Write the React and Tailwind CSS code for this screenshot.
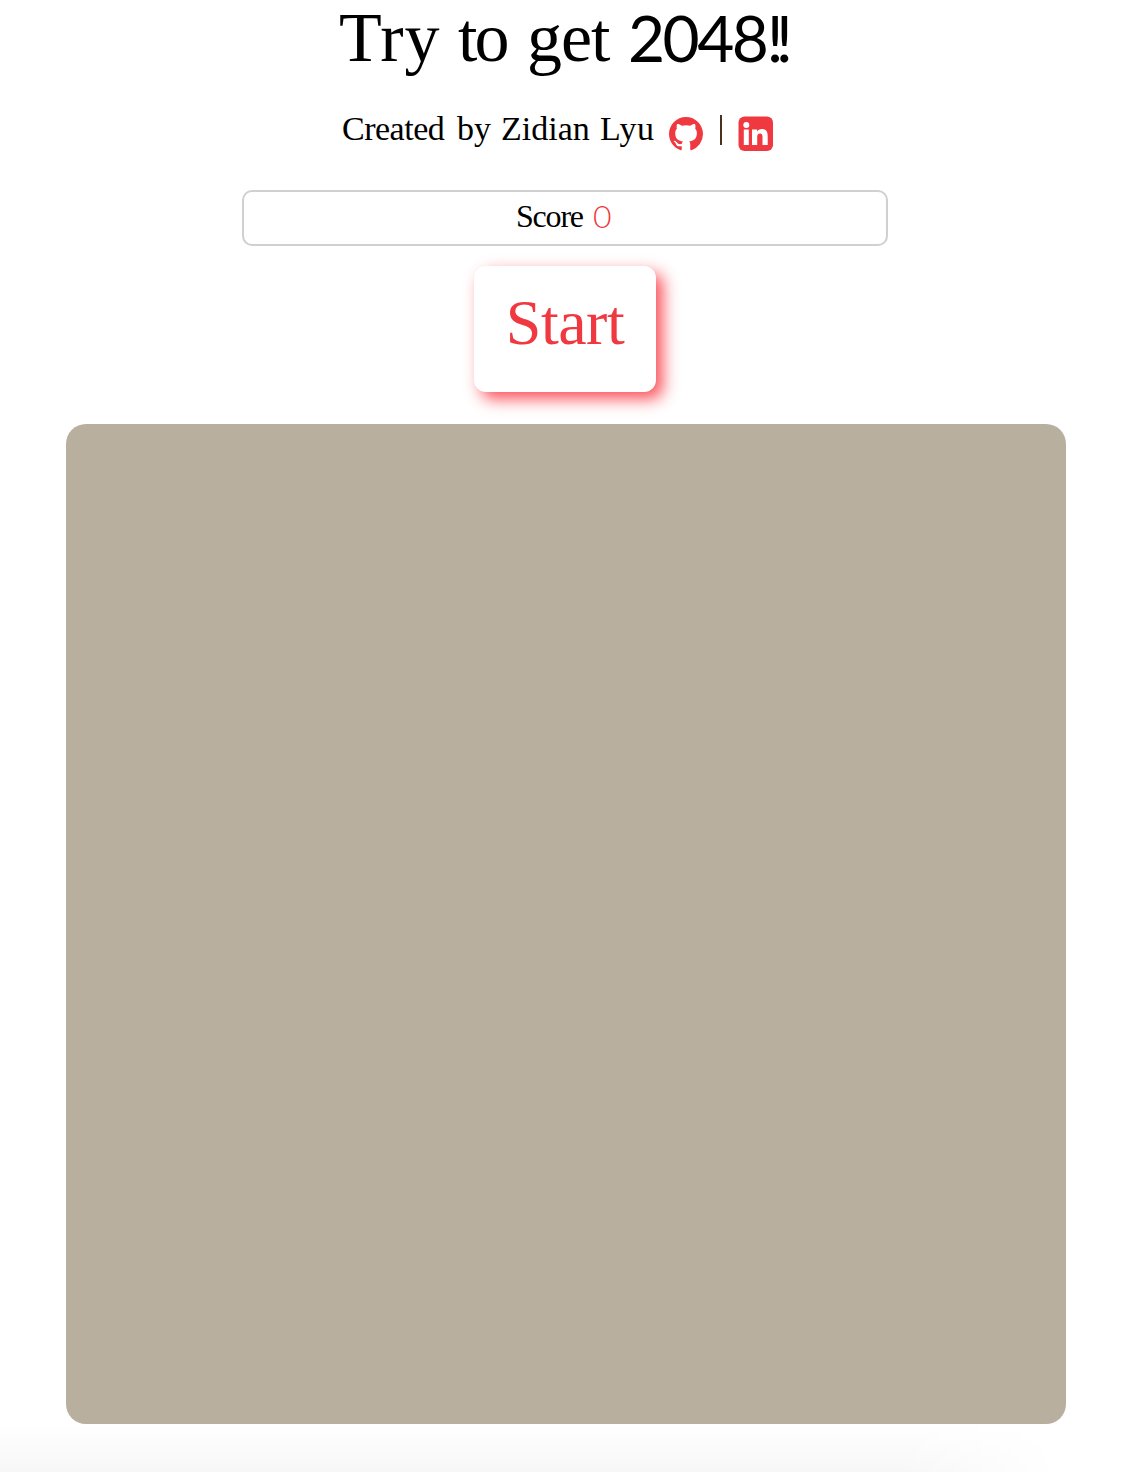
function GithubIcon() {
  return (
    <svg viewBox="0 0 16 16" className="ml-px mt-px h-[34px] w-[34px] fill-[#f03840]" aria-label="GitHub">
      <path d="M8 0C3.58 0 0 3.58 0 8c0 3.54 2.29 6.53 5.47 7.59.4.07.55-.17.55-.38 0-.19-.01-.82-.01-1.49-2.01.37-2.53-.49-2.69-.94-.09-.23-.48-.94-.82-1.13-.28-.15-.68-.52-.01-.53.63-.01 1.08.58 1.23.82.72 1.21 1.87.87 2.33.66.07-.52.28-.87.51-1.07-1.78-.2-3.64-.89-3.64-3.95 0-.87.31-1.59.82-2.15-.08-.2-.36-1.02.08-2.12 0 0 .67-.21 2.2.82.64-.18 1.32-.27 2-.27s1.36.09 2 .27c1.53-1.04 2.2-.82 2.2-.82.44 1.1.16 1.92.08 2.12.51.56.82 1.27.82 2.15 0 3.07-1.87 3.75-3.65 3.95.29.25.54.73.54 1.48 0 1.07-.01 1.93-.01 2.2 0 .21.15.46.55.38A8.01 8.01 0 0 0 16 8c0-4.42-3.58-8-8-8Z" />
    </svg>
  );
}

function LinkedinIcon() {
  return (
    <svg viewBox="0 0 35 35" className="h-[35px] w-[35px]" aria-label="LinkedIn">
      <rect x="0.5" y="0.5" width="34.5" height="34.5" rx="6" fill="#f03840" />
      <g fill="#fff">
        <circle cx="8.3" cy="9" r="3" />
        <path d="M5.8 13.5h5V29h-5zM14 13.5h5v2.1c.9-1.5 2.6-2.5 4.9-2.5 4.5 0 5.8 2.8 5.8 7.1V29h-5.2v-7.7c0-2.1-.4-3.7-2.4-3.7-2.2 0-2.9 1.6-2.9 3.8V29H14z" />
      </g>
    </svg>
  );
}

export default function App() {
  return (
    <main className="h-[1472px] w-[1140px] overflow-hidden bg-white font-['Liberation_Serif',serif] text-black">
      <h1 className="flex h-[80px] pl-[339px] pt-[6px] text-[70px] leading-[64px] whitespace-nowrap">
        <span className="w-[119px] tracking-[1px]">Try</span>
        <span className="w-[69px] tracking-[-3px]">to</span>
        <span className="w-[101px] tracking-[-1px]">get</span>
        <span className="font-['Lato',sans-serif] text-[64px] tracking-[-2.5px]">
          2048<span className="tracking-[-8px]">!!</span>
        </span>
      </h1>
      <div className="flex h-[110px] pl-[342px] text-[34px] leading-[40px] whitespace-nowrap">
        <p className="flex w-[326px] pt-[29px]">
          <span className="w-[115px] tracking-[-0.5px]">Created</span>
          <span className="w-[44px]">by</span>
          <span className="w-[99px]">Zidian</span>
          <span className="tracking-[0.5px]">Lyu</span>
        </p>
        <div className="flex pt-[36px]">
          <GithubIcon />
          <span className="ml-[17px] mr-[16px] -mt-px h-[30px] w-[2px] bg-[#4b301c]" />
          <LinkedinIcon />
        </div>
      </div>
      <div className="ml-[242px] flex h-[56px] w-[646px] rounded-[10px] border-2 border-[#d0d0d0] pl-[272px] pt-[4px] text-[32px] leading-[40px]">
        <span className="w-[77px] tracking-[-1.2px]">Score</span>
        <span className="font-['Lato',sans-serif] font-light text-[#f03840]">0</span>
      </div>
      <button className="ml-[474px] mt-[20px] block h-[126px] w-[182px] rounded-[12px] bg-white pb-[12px] text-[64px] leading-[60px] tracking-[-0.5px] text-[#f03840] shadow-[7px_7px_16px_#f8323cd8]">
        Start
      </button>
      <section className="ml-[66px] mt-[32px] h-[1000px] w-[1000px] rounded-[20px] bg-[#b8af9e]" />
      <div className="h-[48px] w-[1060px] bg-linear-to-b from-white to-[#f7f7f7] mask-r-from-85%" />
    </main>
  );
}
